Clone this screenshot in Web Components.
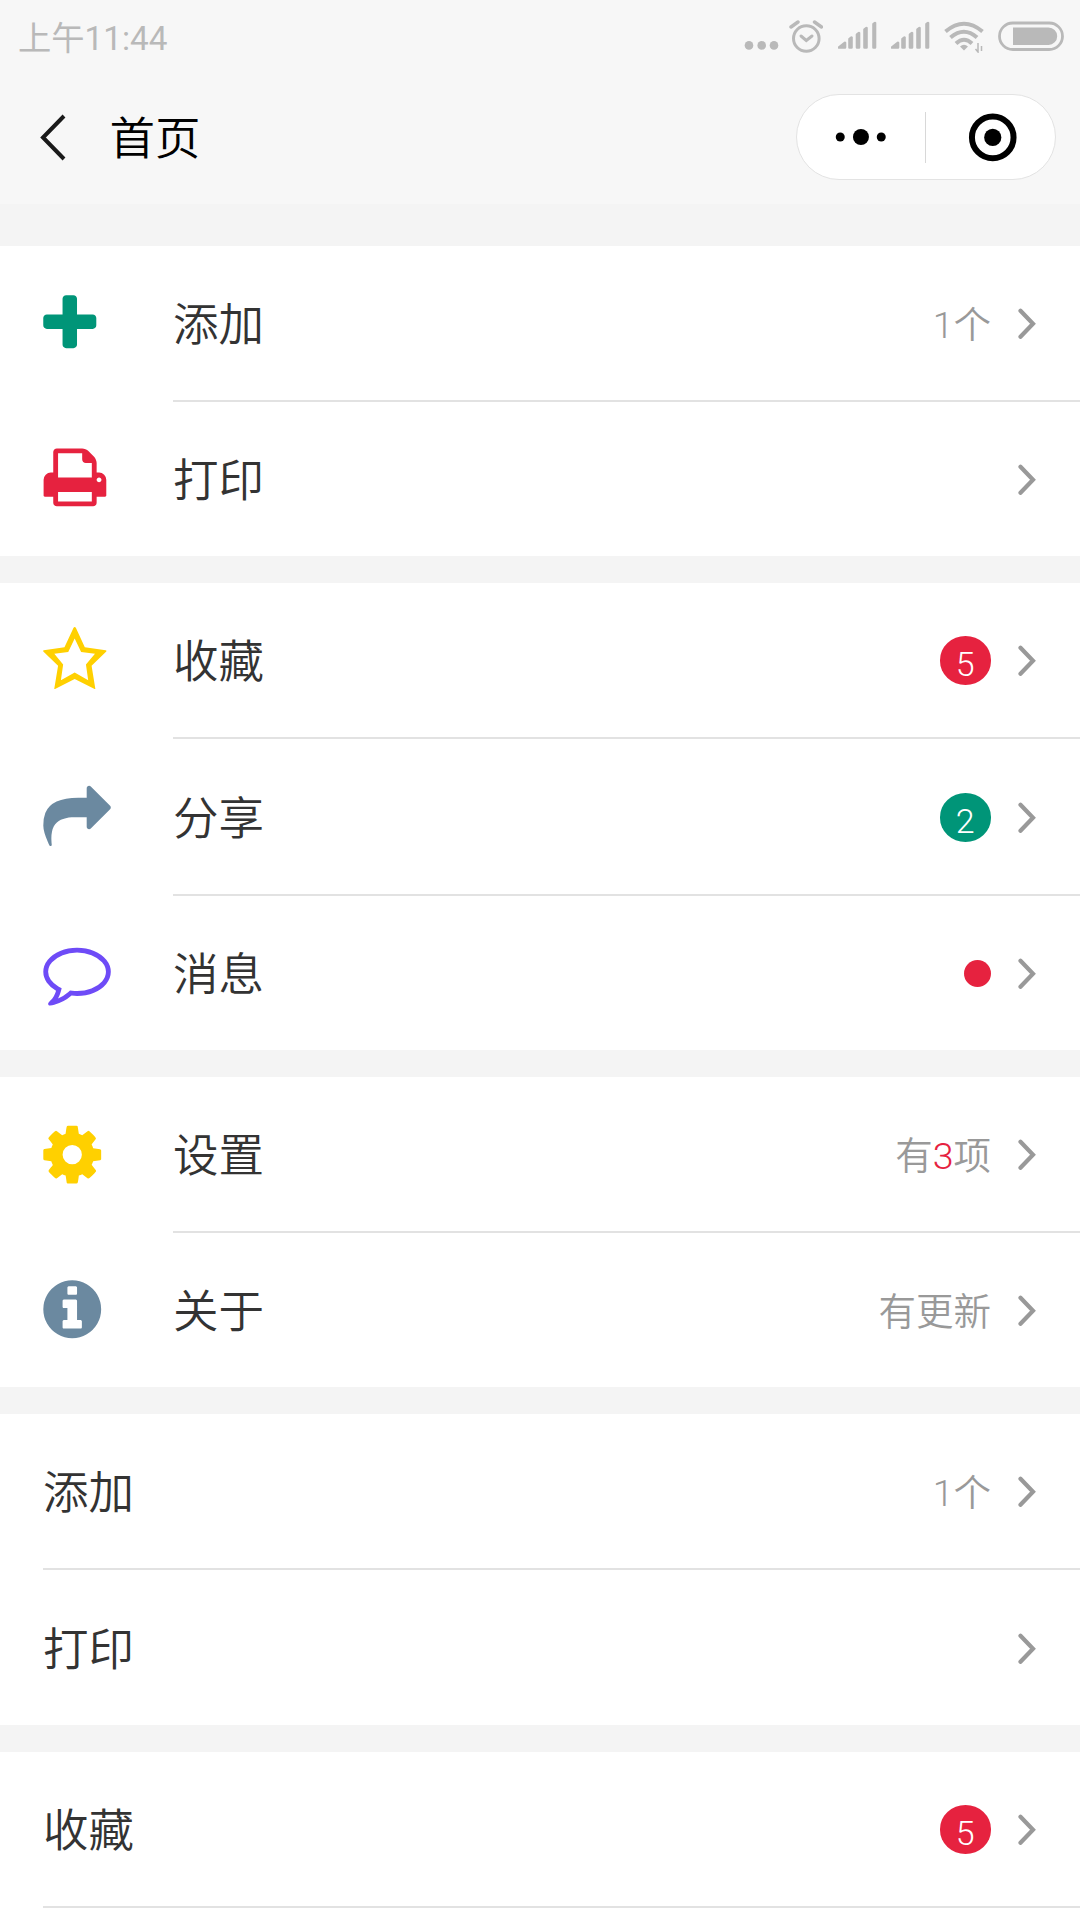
<!DOCTYPE html>
<html lang="zh-CN">
<head>
<meta charset="UTF-8">
<meta name="viewport" content="width=device-width, initial-scale=1">
<title>首页</title>
<style>
    html, body { margin: 0; height: 1920px; overflow: hidden; background: #f4f4f4; }
    body { font-family: Roboto, "Noto Sans CJK SC", "Noto Sans", sans-serif; font-weight: 350; color: #333; }
    /* the highlighted number inside a detail text */
    b { font-weight: inherit; color: #e6223f; }
</style>
</head>
<body>
<app-page>
    <status-bar slot="top">上午11:44</status-bar>
    <nav-bar slot="top">首页</nav-bar>

    <cell-group>
        <list-cell icon="plus" color="#009578">添加<span slot="detail">1个</span></list-cell>
        <list-cell icon="print" color="#e6223f">打印</list-cell>
    </cell-group>
    <cell-group>
        <list-cell icon="star" color="#ffd000">收藏<count-badge slot="detail">5</count-badge></list-cell>
        <list-cell icon="share" color="#6b89a0">分享<count-badge slot="detail" color="#009578">2</count-badge></list-cell>
        <list-cell icon="comment" color="#6e4bf7">消息<count-badge slot="detail" dot></count-badge></list-cell>
    </cell-group>
    <cell-group>
        <list-cell icon="cog" color="#ffd000">设置<span slot="detail">有<b>3</b>项</span></list-cell>
        <list-cell icon="info" color="#6b89a0">关于<span slot="detail">有更新</span></list-cell>
    </cell-group>
    <cell-group>
        <list-cell>添加<span slot="detail">1个</span></list-cell>
        <list-cell>打印</list-cell>
    </cell-group>
    <cell-group>
        <list-cell>收藏<count-badge slot="detail">5</count-badge></list-cell>
        <list-cell></list-cell>
    </cell-group>
</app-page>

<script>
/* icon name -> [viewBox x, viewBox y, path], all on a 1792 grid */
const ICONS = {
    plus: [185, -35, 'M1600 736v192q0 40-28 68t-68 28h-416v416q0 40-28 68t-68 28h-192q-40 0-68-28t-28-68v-416h-416q-40 0-68-28t-28-68v-192q0-40 28-68t68-28h416v-416q0-40 28-68t68-28h192q40 0 68 28t28 68v416h416q40 0 68 28t28 68z'],
    print: [48, 35, 'M448 1536h896v-256h-896v256zm0-640h896v-384h-160q-40 0-68-28t-28-68v-160h-640v640zm1152 64q0-26-19-45t-45-19-45 19-19 45 19 45 45 19 45-19 19-45zm128 0v416q0 13-9.5 22.5t-22.5 9.5h-224v160q0 40-28 68t-68 28h-960q-40 0-68-28t-28-68v-160h-224q-13 0-22.5-9.5t-9.5-22.5v-416q0-79 56.5-135.5t135.5-56.5h64v-544q0-40 28-68t68-28h672q40 0 88 20t76 48l152 152q28 28 48 76t20 88v256h64q79 0 135.5 56.5t56.5 135.5z'],
    star: [0, -30, 'M841 -5Q860 -5 875 25L1110 535 1665 612Q1700 620 1680 648L1290 1028 1390 1645 1370 1645 841 1378 320 1645 298 1645 400 1028 8 648Q-10 620 20 612L570 535 808 25Q822 -5 841 -5zM841 300 670 657 300 705 535 990 475 1410 841 1205 1200 1410 1140 990 1380 705 1012 657z'],
    share: [-8, -10, 'M1792 640q0 26-19 45l-512 512q-19 19-45 19t-45-19-19-45v-256h-224q-98 0-175.5 6t-154 21.5-133 42.5-105.5 69.5-80 101-48.5 138.5-17.5 181q0 55 5 123 0 6 2.5 23.5t2.5 26.5q0 15-8.5 25t-23.5 10q-16 0-28-17-7-9-13-22t-13.5-30-10.5-24q-127-285-127-451 0-199 53-333 162-403 875-403h224v-256q0-26 19-45t45-19 45 19l512 512q19 19 19 45z'],
    comment: [-8, 25, 'M896 384q-204 0-381.5 69.5t-282 187.5-104.5 255q0 112 71.5 213.5t201.5 175.5l87 50-27 96q-24 91-70 172 152-63 275-171l43-38 57 6q69 8 130 8 204 0 381.5-69.5t282-187.5 104.5-255-104.5-255-282-187.5-381.5-69.5zm896 512q0 174-120 321.5t-326 233-450 85.5q-70 0-145-8-198 175-460 242-49 14-114 22h-5q-15 0-27-10.5t-16-27.5v-1q-3-4-.5-12t2-10 4.5-9.5l6-9 7-8.5 8-9q7-8 31-34.5t34.5-38 31-39.5 32.5-51 27-59 26-76q-157-89-247.5-220t-90.5-281q0-174 120-321.5t326-233 450-85.5 450 85.5 326 233 120 321.5z'],
    cog: [120, -25, 'M1152 896q0-106-75-181t-181-75-181 75-75 181 75 181 181 75 181-75 75-181zm512-109v222q0 12-8 23t-20 13l-185 28q-19 54-39 91 35 50 107 138 10 12 10 25t-9 23q-27 37-99 108t-94 71q-12 0-26-9l-138-108q-44 23-91 38-16 136-29 186-7 28-36 28h-222q-14 0-24.5-8.5t-11.5-21.5l-28-184q-49-16-90-37l-141 107q-10 9-25 9-14 0-25-11-126-114-165-168-7-10-7-23 0-12 8-23 15-21 51-66.5t54-70.5q-27-50-41-99l-183-27q-13-2-21-12.5t-8-23.5v-222q0-12 8-23t19-13l186-28q14-46 39-92-40-57-107-138-10-12-10-24 0-10 9-23 26-36 98.5-107.5t94.5-71.5q13 0 26 10l138 107q44-23 91-38 16-136 29-186 7-28 36-28h222q14 0 24.5 8.5t11.5 21.5l28 184q49 16 90 37l142-107q9-9 24-9 13 0 25 10 129 119 165 170 7 8 7 22 0 12-8 23-15 21-51 66.5t-54 70.5q26 50 41 98l183 28q13 2 21 12.5t8 23.5z'],
    info: [120, 40, 'M1152 1376v-160q0-14-9-23t-23-9h-96v-512q0-14-9-23t-23-9h-320q-14 0-23 9t-9 23v160q0 14 9 23t23 9h96v320h-96q-14 0-23 9t-9 23v160q0 14 9 23t23 9h448q14 0 23-9t9-23zm-128-896v-160q0-14-9-23t-23-9h-192q-14 0-23 9t-9 23v160q0 14 9 23t23 9h192q14 0 23-9t9-23zm640 416q0 209-103 385.5t-279.5 279.5-385.5 103-385.5-103-279.5-279.5-103-385.5 103-385.5 279.5-279.5 385.5-103 385.5 103 279.5 279.5 103 385.5z'],
};

/* app-page ---------------------------------------------------------------- */
class AppPage extends HTMLElement {
    constructor() {
        super();
        this.attachShadow({ mode: 'open' }).innerHTML = `
      <style>
        :host{display:block;width:1080px;height:1920px;overflow:hidden;background:#f4f4f4}
        header{height:204px;background:#f7f7f7}
        main{display:flex;flex-direction:column;gap:27px;padding-top:41.800px}
      </style>
      <header><slot name="top"></slot></header>
      <main><slot></slot></main>
    `;
    }
}

/* status-bar -------------------------------------------------------------- */
class StatusBar extends HTMLElement {
    constructor() {
        super();
        const signal = `
      <svg class="signal" width="40" height="30" viewBox="0 0 40 30">
        <path d="M1 27.500 7 22.800v4.700zM11.500 27.500v-8.500l2-1.500v10zM19 27.500v-13l2-1.500v14.500zM26.500 27.500v-18l2-1.500v19.500zM35.500 27.500v-23.500l1.500-1v24.500z"
              fill="#b9b9b9" stroke="#b9b9b9" stroke-width="2.600" stroke-linejoin="round"/>
      </svg>`;
        this.attachShadow({ mode: 'open' }).innerHTML = `
      <style>
        :host{display:flex;justify-content:space-between;height:72px;padding:0 15px 0 18px;
              box-sizing:border-box;color:#b9b9b9;font-size:33.300px;line-height:77px;font-weight:400}
        .icons{display:flex;padding-top:20px;height:34px}
        svg{display:block}
        .dots{margin-right:10px}
        .alarm{margin-right:15px}
        .signal,.wifi{margin-right:13px}
      </style>
      <span><slot></slot></span>
      <div class="icons">
        <svg class="dots" width="35" height="32" viewBox="0 0 35 32" fill="#b9b9b9">
          <circle cx="5" cy="25.400" r="4.300"/><circle cx="17.700" cy="25.400" r="4.300"/><circle cx="30" cy="25.400" r="4.300"/>
        </svg>
        <svg class="alarm" width="34" height="34" viewBox="0 0 34 34" fill="none" stroke="#b9b9b9" stroke-width="3">
          <circle cx="17.300" cy="18.500" r="12.800"/>
          <path d="m12 16 5.300 4.500 5.700-4.500" stroke-linecap="round"/>
          <path d="M2 7 9 2M25.500 2l7 5" stroke-width="3.400" stroke-linecap="round"/>
        </svg>
        ${signal}${signal}
        <svg class="wifi" width="41" height="33" viewBox="0 0 41 33" fill="none" stroke="#b9b9b9" stroke-width="4">
          <path d="M1.500 11.500Q20 -4 38.500 11.500M6.500 17.500Q20 6 33 17.500M12 23.500Q20 16 28 23.500"/>
          <path d="M16 26.500q4-3.500 8 0l-4 4z" fill="#b9b9b9" stroke="none"/>
          <path d="M34 23v9l-2.500-3M37.500 31v-5" stroke-width="1.500"/>
        </svg>
        <svg width="67" height="32" viewBox="0 0 67 32">
          <rect x="1.500" y="3" width="63" height="26.500" rx="13.250" fill="none" stroke="#b9b9b9" stroke-width="2.800"/>
          <path d="M15 7.500h35.500a8.700 8.700 0 0 1 0 17.400h-35.500z" fill="#b9b9b9"/>
        </svg>
      </div>
    `;
    }
}

/* nav-bar ----------------------------------------------------------------- */
class NavBar extends HTMLElement {
    constructor() {
        super();
        this.attachShadow({ mode: 'open' }).innerHTML = `
      <style>
        :host{display:flex;align-items:center;height:130px;padding:0 24.500px 0 38px;
              box-sizing:border-box;color:#000}
        svg{display:block}
        .title{flex:1;margin:6px 0 0 43.500px;font-size:45.500px;line-height:64px}
        .capsule{display:flex;align-items:center;width:260px;height:86px;box-sizing:border-box;
                 border:1px solid #e3e3e3;border-radius:43px;background:#fff}
        .capsule svg{flex:1}
        .line{width:1px;height:51px;background:#d8d8d8}
      </style>
      <svg width="28" height="48" viewBox="0 0 28 48" fill="none" stroke="#1a1a1a" stroke-width="4">
        <path d="M26 3 5 24.500 26 46"/>
      </svg>
      <span class="title"><slot></slot></span>
      <div class="capsule">
        <svg height="50" viewBox="0 0 128 50">
          <circle cx="43" cy="25" r="4.500"/><circle cx="63.700" cy="25" r="8"/><circle cx="84" cy="25" r="4.500"/>
        </svg>
        <span class="line"></span>
        <svg height="50" viewBox="0 0 128 50">
          <circle cx="66.500" cy="25.400" r="20.800" fill="none" stroke="#000" stroke-width="6"/>
          <circle cx="66.500" cy="25.400" r="8.600"/>
        </svg>
      </div>
    `;
    }
}

/* cell-group -------------------------------------------------------------- */
class CellGroup extends HTMLElement {
    constructor() {
        super();
        this.attachShadow({ mode: 'open' }).innerHTML = `
      <style>
        :host{display:block;background:#fff}
        ::slotted(:not(:last-child)){--line:2.4px}
      </style>
      <slot></slot>
    `;
    }
}

/* list-cell: icon | label ... detail > ------------------------------------- */
class ListCell extends HTMLElement {
    constructor() {
        super();
        this.attachShadow({ mode: 'open' });
    }

    connectedCallback() {
        this.shadowRoot.innerHTML = `
      <style>
        :host{display:flex;height:calc(154px + var(--line, 0px));padding-left:43px}
        svg{display:block}
        .icon{display:flex;align-items:center;width:130px;height:154px}
        .body{flex:1;display:flex;align-items:center;height:154px;padding-right:42px;
              border-bottom:var(--line, 0px) solid #e2e2e2}
        .label{flex:1;margin-top:6px;font-size:45.500px;line-height:64px}
        .detail{margin-right:27px;color:#999;font-size:37.500px;line-height:50px}
        ::slotted(span){display:block;margin-top:4px}
      </style>
      ${this.#icon()}
      <div class="body">
        <span class="label"><slot></slot></span>
        <span class="detail"><slot name="detail"></slot></span>
        <svg width="20" height="32" viewBox="0 0 20 32" fill="none" stroke="#999" stroke-width="4.200">
          <path d="M2.500 3.800 15 16.800 2.500 29.800" stroke-linecap="round"/>
        </svg>
      </div>
    `;
    }

    #icon() {
        const icon = ICONS[this.getAttribute('icon')];
        if (!icon) return '';
        const [x, y, d] = icon;
        return `
      <div class="icon">
        <svg width="67.500" height="67.500" viewBox="${x} ${y} 1792 1792" overflow="visible"
             fill="${this.getAttribute('color')}" fill-rule="evenodd"><path d="${d}"/></svg>
      </div>`;
    }
}

/* count-badge: number, or a small dot --------------------------------------- */
class CountBadge extends HTMLElement {
    constructor() {
        super();
        this.attachShadow({ mode: 'open' });
    }

    connectedCallback() {
        this.shadowRoot.innerHTML = `
      <style>
        :host{display:block;width:51.500px;height:49px;border-radius:26px/24.5px;margin-top:1px;
              background:${this.getAttribute('color') || '#e6223f'};
              color:#fff;font-size:34px;line-height:56px;text-align:center}
        :host([dot]){width:27px;height:27px;border-radius:50%}
      </style>
      <slot></slot>
    `;
    }
}

customElements.define('app-page', AppPage);
customElements.define('status-bar', StatusBar);
customElements.define('nav-bar', NavBar);
customElements.define('cell-group', CellGroup);
customElements.define('list-cell', ListCell);
customElements.define('count-badge', CountBadge);
</script>
</body>
</html>
